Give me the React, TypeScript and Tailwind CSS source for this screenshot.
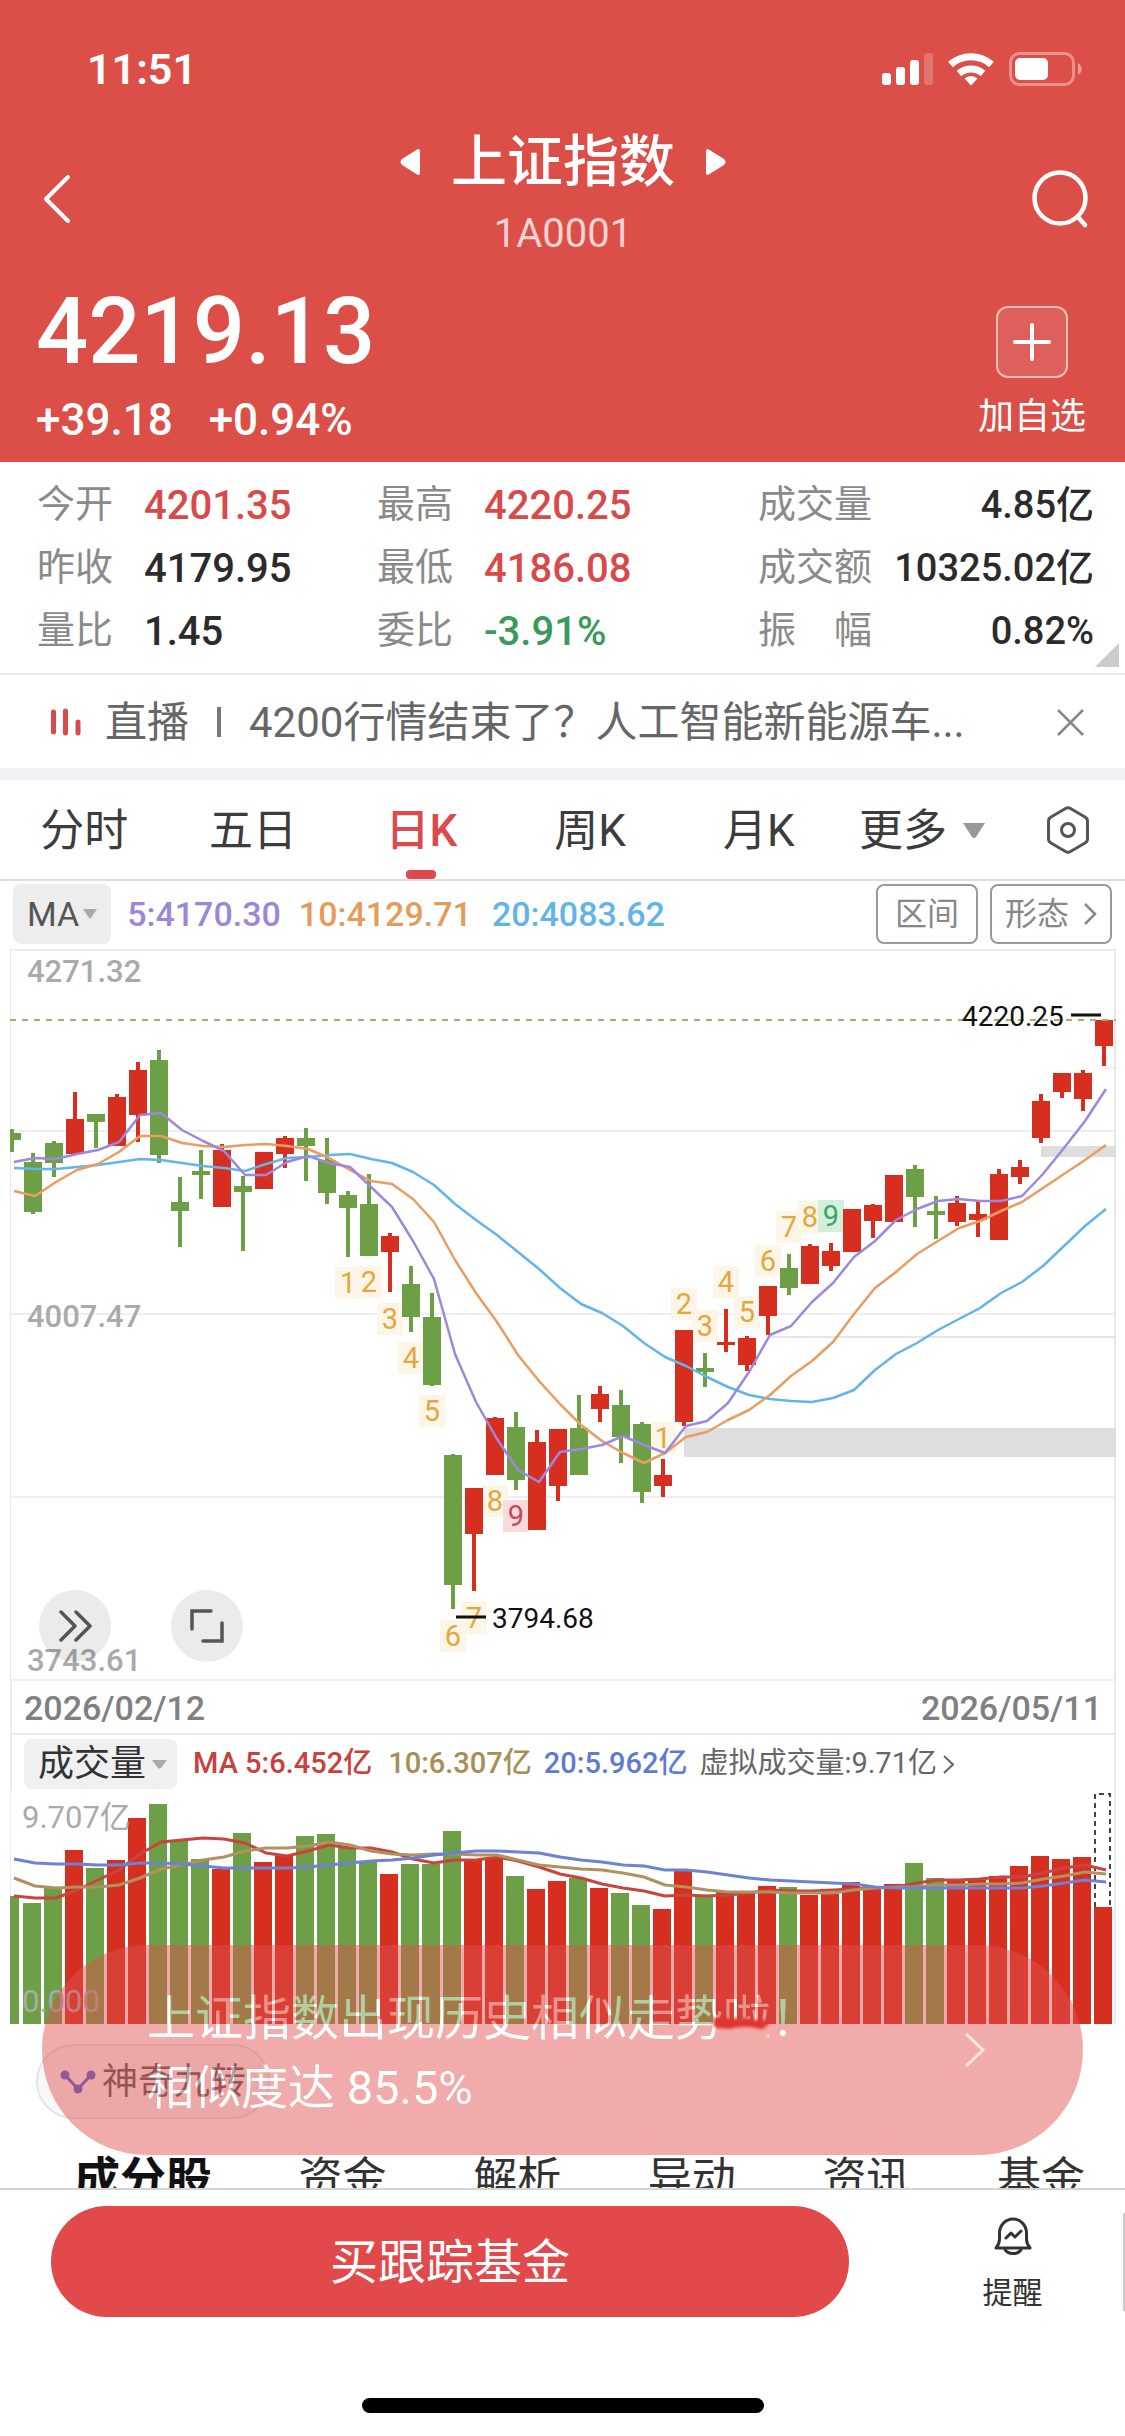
import { useState } from 'react'
import clsx from 'clsx'

const RED = '#d62f20'
const GREEN = '#6d9f46'

// [body top, body bottom, wick top, wick bottom, r = up / g = down]
type Candle = [number, number, number, number, 'r' | 'g']

const CANDLES: Candle[] = [
  [184, 191, 180, 203, 'g'], [213, 263, 204, 265, 'g'], [194, 214, 192, 228, 'g'], [170, 205, 143, 205, 'r'],
  [165, 173, 165, 199, 'g'], [148, 197, 145, 197, 'r'], [121, 166, 113, 193, 'r'], [111, 206, 101, 214, 'g'],
  [253, 262, 228, 298, 'g'], [222, 226, 201, 250, 'g'], [201, 258, 195, 258, 'r'], [237, 243, 227, 302, 'g'],
  [203, 240, 203, 240, 'r'], [189, 205, 187, 219, 'r'], [189, 197, 179, 232, 'g'], [211, 244, 189, 255, 'g'],
  [246, 259, 242, 308, 'g'], [255, 307, 225, 307, 'g'], [287, 303, 284, 343, 'r'], [335, 368, 317, 383, 'g'],
  [368, 436, 344, 437, 'g'], [506, 636, 505, 660, 'g'], [539, 585, 539, 642, 'r'], [469, 526, 468, 526, 'r'],
  [478, 531, 463, 541, 'g'], [493, 581, 481, 581, 'r'], [480, 537, 480, 552, 'r'], [479, 526, 446, 526, 'g'],
  [445, 460, 437, 473, 'r'], [456, 488, 441, 514, 'g'], [475, 543, 473, 554, 'g'], [526, 537, 510, 548, 'r'],
  [381, 473, 381, 477, 'r'], [419, 423, 404, 438, 'g'], [393, 396, 360, 403, 'r'], [389, 416, 387, 422, 'r'],
  [337, 367, 337, 386, 'r'], [319, 339, 305, 346, 'g'], [297, 335, 295, 335, 'r'], [302, 317, 294, 322, 'r'],
  [260, 303, 260, 303, 'r'], [256, 272, 255, 289, 'r'], [226, 273, 226, 273, 'r'], [220, 248, 216, 278, 'g'],
  [262, 266, 247, 290, 'g'], [254, 273, 247, 277, 'r'], [265, 271, 252, 288, 'r'], [225, 291, 220, 291, 'r'],
  [218, 228, 211, 235, 'r'], [152, 189, 145, 194, 'r'], [124, 143, 124, 149, 'r'], [124, 150, 121, 162, 'r'],
  [71, 97, 71, 117, 'r'],
]

const MA5 = [213, 209, 210, 205, 201, 193, 166, 164, 181, 192, 202, 226, 226, 213, 207, 214, 218, 238, 258, 292, 330, 405, 453, 490, 521, 533, 503, 500, 496, 487, 496, 504, 477, 472, 454, 423, 386, 377, 353, 334, 308, 292, 271, 260, 252, 250, 252, 252, 247, 225, 199, 172, 140]
const MA10 = [242, 247, 233, 221, 215, 203, 187, 187, 194, 197, 198, 196, 195, 197, 200, 209, 221, 232, 235, 250, 273, 311, 344, 373, 406, 432, 455, 476, 492, 504, 514, 504, 488, 483, 471, 461, 446, 427, 412, 393, 365, 339, 323, 305, 292, 279, 272, 262, 253, 239, 225, 211, 196]
const MA20 = [219, 220, 220, 218, 216, 213, 210, 211, 214, 217, 219, 222, 215, 209, 208, 206, 205, 210, 214, 223, 236, 255, 271, 286, 303, 320, 339, 355, 364, 377, 394, 408, 417, 428, 438, 446, 450, 452, 453, 449, 441, 421, 405, 394, 381, 370, 359, 344, 333, 317, 297, 277, 260]

const VOLUMES = [116, 123, 108, 70, 88, 80, 38, 24, 61, 79, 89, 53, 82, 76, 56, 54, 67, 82, 94, 84, 84, 51, 80, 78, 96, 109, 101, 98, 108, 113, 125, 129, 91, 115, 112, 112, 106, 107, 115, 114, 102, 107, 104, 83, 98, 101, 100, 96, 86, 76, 79, 77, 127]
const VOL5 = [116, 118, 118, 110, 100, 90, 74, 62, 60, 58, 59, 63, 73, 76, 71, 65, 68, 68, 72, 79, 83, 80, 80, 77, 81, 87, 94, 98, 104, 108, 111, 116, 115, 116, 115, 113, 110, 111, 111, 110, 109, 108, 107, 103, 100, 100, 99, 97, 97, 93, 88, 85, 90]
const VOL10 = [98, 106, 108, 107, 107, 105, 98, 89, 85, 80, 77, 71, 68, 68, 66, 62, 65, 71, 74, 75, 74, 74, 75, 75, 80, 85, 87, 89, 90, 93, 97, 105, 107, 110, 112, 112, 112, 113, 113, 113, 110, 108, 107, 107, 105, 105, 104, 104, 103, 99, 96, 92, 94]
const VOL20 = [79, 83, 84, 84, 85, 85, 83, 83, 84, 86, 88, 88, 88, 88, 87, 85, 83, 81, 80, 78, 75, 73, 71, 71, 72, 73, 77, 80, 82, 85, 86, 90, 90, 92, 95, 98, 100, 101, 102, 103, 104, 107, 108, 108, 108, 108, 108, 108, 108, 106, 103, 100, 102]

// nine-turn marks: candle index, digit, top of the tag
const MARKS: [number, number, number][] = [
  [16, 1, 318], [17, 2, 317], [18, 3, 354], [19, 4, 393], [20, 5, 446], [21, 6, 671], [22, 7, 653], [23, 8, 536], [24, 9, 551],
  [31, 1, 473], [32, 2, 339], [33, 3, 361], [34, 4, 317], [35, 5, 347], [36, 6, 296], [37, 7, 262], [38, 8, 252], [39, 9, 251],
]

const QUOTES = [
  { label: '今开', value: '4201.35', tone: 'text-[#d84a4a]' },
  { label: '最高', value: '4220.25', tone: 'text-[#d84a4a]' },
  { label: '成交量', value: '4.85亿', tone: 'text-[#2b2b2b]' },
  { label: '昨收', value: '4179.95', tone: 'text-[#2b2b2b]' },
  { label: '最低', value: '4186.08', tone: 'text-[#d84a4a]' },
  { label: '成交额', value: '10325.02亿', tone: 'text-[#2b2b2b]' },
  { label: '量比', value: '1.45', tone: 'text-[#2b2b2b]' },
  { label: '委比', value: '-3.91%', tone: 'text-[#3a9a5b]' },
  { label: '振　幅', value: '0.82%', tone: 'text-[#2b2b2b]' },
]

const PERIODS = ['分时', '五日', '日K', '周K', '月K']
const SECTIONS = ['成分股', '资金', '解析', '异动', '资讯', '基金']

const line = (ys: number[]) => ys.map((y, i) => `${14 + i * 21},${y}`).join(' ')

function StatusBar() {
  return (
    <div className="flex h-[50px] items-center justify-between pl-[87px] pr-[42px]">
      <span className="text-[43px] font-semibold leading-[50px]">11:51</span>
      <svg className="h-[36px] w-[202px]" viewBox="0 0 202 36" fill="#fff">
        <rect x="1" y="22" width="9" height="12" rx="3" />
        <rect x="15" y="16" width="9" height="18" rx="3" />
        <rect x="29" y="9" width="9" height="25" rx="3" />
        <rect x="43" y="2" width="9" height="32" rx="3" opacity=".22" />
        <g fill="none" stroke="#fff" strokeWidth="7">
          <path d="M69.500 13.500a31 31 0 0 1 41 0" />
          <path d="M78 22.500a18.500 18.500 0 0 1 24 0" />
        </g>
        <path d="M90 34.500l-6.500-7a9.500 9.500 0 0 1 13 0z" />
        <rect x="129.500" y="2.500" width="63" height="31" rx="9" fill="none" stroke="#fff" strokeWidth="3" opacity=".38" />
        <rect x="134" y="7" width="33" height="22" rx="5" />
        <path d="M197 12.500c5 1.500 5 9.500 0 11z" opacity=".45" />
      </svg>
    </div>
  )
}

function Header() {
  return (
    <header className="bg-[#db4f48] pb-[18px] pt-[44px] text-white">
      <StatusBar />
      <nav className="mt-9 flex h-[138px] items-center justify-between pl-[42px] pr-[37px]">
        <button aria-label="返回" className="w-[52px]">
          <svg className="h-[50px] w-[30px]" viewBox="0 0 30 50" fill="none" stroke="#fff" strokeWidth="4" strokeLinecap="round" strokeLinejoin="round">
            <path d="M26 3L4 25l22 22" />
          </svg>
        </button>
        <div className="self-start text-center">
          <div className="flex items-center gap-[31px]">
            <button aria-label="上一个">
              <svg className="h-[26px] w-[20px]" viewBox="0 0 20 26" fill="#fff"><path d="M18 0q2 0 2 2v22q0 2-2 2L2 16q-3-3 0-6z" /></svg>
            </button>
            <h1 className="text-[56px] font-medium leading-[64px]">上证指数</h1>
            <button aria-label="下一个">
              <svg className="h-[26px] w-[20px]" viewBox="0 0 20 26" fill="#fff"><path d="M2 0Q0 0 0 2v22q0 2 2 2l16-10q3-3 0-6z" /></svg>
            </button>
          </div>
          <p className="mt-[18px] text-[40px] leading-[44px] text-white/75">1A0001</p>
        </div>
        <button aria-label="搜索">
          <svg className="h-[58px] w-[56px]" viewBox="0 0 56 58" fill="none" stroke="#fff" strokeWidth="4.500" strokeLinecap="round">
            <circle cx="28" cy="28" r="25.500" />
            <path d="M46 47l7 8" />
          </svg>
        </button>
      </nav>
      <div className="flex items-start justify-between pl-[36px] pr-[39px] pt-3.5">
        <div>
          <p className="text-[92px] font-medium leading-[100px]">4219.13</p>
          <p className="mt-3.5 flex gap-9 text-[44px] font-medium leading-[48px]">
            <span>+39.18</span>
            <span>+0.94%</span>
          </p>
        </div>
        <button className="mt-6 flex flex-col items-center">
          <span className="flex size-[72px] items-center justify-center rounded-[12px] border-2 border-white/60 bg-white/10">
            <svg className="size-[38px]" viewBox="0 0 38 38" stroke="#fff" strokeWidth="4" strokeLinecap="round"><path d="M19 2v34M2 19h34" /></svg>
          </span>
          <span className="mt-[15px] text-[36px] leading-[48px]">加自选</span>
        </button>
      </div>
    </header>
  )
}

function QuoteGrid() {
  return (
    <div className="relative border-b-2 border-[#e9e9e9] pb-[11px] pl-[37px] pr-[31px] pt-[11px]">
      <dl className="grid grid-cols-[340fr_381fr_336fr]">
        {QUOTES.map((q, i) => (
          <div key={q.label} className={clsx('flex h-[63px] items-center', i % 3 === 2 && 'justify-between')}>
            <dt className={clsx('text-[38px] text-[#8a8a8a]', i % 3 !== 2 && 'w-[107px]')}>{q.label}</dt>
            <dd className={clsx('pt-0.5 font-medium', i % 3 === 2 ? 'text-[38px]' : 'text-[40px]', q.tone)}>{q.value}</dd>
          </div>
        ))}
      </dl>
      <svg className="absolute bottom-1.5 right-1.5 size-[24px]" viewBox="0 0 24 24" fill="#ccc"><path d="M24 0v24H0z" /></svg>
    </div>
  )
}

function NewsBar() {
  return (
    <div className="flex h-[93px] items-center pl-[51px] pr-[41px] pt-px text-[#666]">
      <svg className="h-[28px] w-[30px] shrink-0" viewBox="0 0 30 28" stroke="#d84a4a" strokeWidth="5" strokeLinecap="round">
        <path d="M2.500 4v20M14.500 3v22M27 14v11" />
      </svg>
      <a href="#live" className="ml-6 flex min-w-0 flex-1 items-center whitespace-nowrap text-[42px]">
        直播
        <span className="mx-[28px] h-[30px] w-[4px] bg-[#777]" />
        4200行情结束了？人工智能新能源车...
      </a>
      <button aria-label="关闭">
        <svg className="size-[27px]" viewBox="0 0 27 27" stroke="#888" strokeWidth="2.500"><path d="M1 1l25 25M26 1L1 26" /></svg>
      </button>
    </div>
  )
}

function PeriodTabs() {
  const [active, setActive] = useState('日K')
  return (
    <div className="flex h-[101px] items-center border-b-2 border-[#dedede] pr-9 text-[44px] text-[#3c3c3c]">
      <div role="tablist" className="grid h-full flex-[843] grid-cols-5">
        {PERIODS.map(p => (
          <button
            key={p}
            role="tab"
            aria-selected={p === active}
            onClick={() => setActive(p)}
            className={clsx('relative pt-0.5', p === active && 'font-medium text-[#dc4a4c]')}>
            {p}
            {p === active && <span className="absolute bottom-0 left-1/2 h-[9px] w-[30px] -translate-x-1/2 rounded-[4px] bg-[#dc4a4c]" />}
          </button>
        ))}
      </div>
      <div className="flex flex-[246] items-center justify-between">
        <button className="flex items-center gap-4 pl-4 pt-0.5">
          更多
          <svg className="h-[15px] w-[22px]" viewBox="0 0 22 15" fill="#999"><path d="M0 0h22L13 14q-2 2-4 0z" /></svg>
        </button>
        <button aria-label="设置">
          <svg className="h-[48px] w-[42px]" viewBox="0 0 42 48" fill="none" stroke="#555" strokeWidth="3" strokeLinejoin="round">
            <path d="M18.500 2.500q2.500-1.500 5 0L38 11q2.500 1.500 2.500 4v18q0 2.500-2.500 4l-14.500 8.500q-2.500 1.500-5 0L4 37q-2.500-1.500-2.500-4V15q0-2.500 2.500-4z" />
            <circle cx="21" cy="24" r="6.500" />
          </svg>
        </button>
      </div>
    </div>
  )
}

function MaLegend() {
  return (
    <div className="flex h-[68px] items-center gap-6 px-[13px] pb-0.5 text-[34px]">
      <button className="flex h-[60px] items-center gap-1 rounded-[8px] bg-[#ededed] px-3.5 text-[#555]">
        MA
        <svg className="h-[10px] w-[14px]" viewBox="0 0 14 10" fill="#aaa"><path d="M0 0h14L8 9q-1 1-2 0z" /></svg>
      </button>
      <span className="-ml-2 font-medium text-[#9b87d6]">5:4170.30</span>
      <span className="-ml-1.5 font-medium text-[#e59b5c]">10:4129.71</span>
      <span className="-ml-1 font-medium text-[#62b4e8]">20:4083.62</span>
      <button className="ml-auto h-[60px] rounded-[8px] border-2 border-[#999] px-[17px] text-[32px] text-[#888]">区间</button>
      <button className="-ml-3 flex h-[60px] items-center gap-3.5 rounded-[8px] border-2 border-[#999] px-[13px] text-[32px] text-[#888]">
        形态
        <svg className="h-[22px] w-[14px]" viewBox="0 0 14 22" fill="none" stroke="#888" strokeWidth="2.500"><path d="M2 1l10 10L2 21" /></svg>
      </button>
    </div>
  )
}

function KLineChart() {
  return (
    <div className="relative">
      <svg className="block h-auto w-full" viewBox="10 0 1106 732" fontFamily="Roboto, sans-serif">
        {[1, 182, 365, 548, 731].map(y => <path key={y} d={`M10 ${y}H1116`} stroke="#efefef" strokeWidth="2" />)}
        <path d="M10 0V732M1115 0V732" stroke="#e9e9e9" strokeWidth="2" />
        <g fill="#aaa" fontSize="31" fontWeight="500">
          <text x="27" y="33">4271.32</text>
          <text x="27" y="378">4007.47</text>
          <text x="27" y="722">3743.61</text>
        </g>

        {/* gaps */}
        <rect x="684" y="479" width="432" height="29" fill="#dedede" />
        <rect x="1041" y="197" width="75" height="11" fill="#dedede" />
        <path d="M770 388H1116" stroke="#ddd" strokeWidth="1.500" />
        <path d="M1104 119H1116" stroke="#eed9d9" strokeWidth="1" />

        {MARKS.map(([i, n, y]) => {
          const nine = n === 9
          const up = i > 30
          return (
            <g key={i}>
              <rect x={12 + i * 21 - 13} y={y} width="26" height="32" fill={nine ? (up ? '#d5efdf' : '#f8dcdd') : '#fdf5e8'} />
              <text x={12 + i * 21} y={y + 26} fontSize="29" textAnchor="middle" fill={nine ? (up ? '#3fa564' : '#cc4558') : '#e3a83c'}>{n}</text>
            </g>
          )
        })}

        {CANDLES.map(([t, b, wt, wb, c], i) => (
          <g key={i} fill={c === 'r' ? RED : GREEN}>
            <rect x={i ? 3 + i * 21 : 10} y={t} width={i ? 18 : 11} height={b - t} />
            <rect x={10 + i * 21} y={wt} width="4" height={wb - wt} />
          </g>
        ))}

        <path d="M10 71H1116" stroke="#b9a36f" strokeWidth="2" strokeDasharray="6 6" />
        <g fill="none" strokeWidth="2.500" strokeLinejoin="round">
          <polyline points={line(MA20)} stroke="#62b5ea" />
          <polyline points={line(MA10)} stroke="#e99d5f" />
          <polyline points={line(MA5)} stroke="#9c88dc" />
        </g>

        <g fill="#111" fontSize="28">
          <text x="962" y="77">4220.25</text>
          <text x="492" y="679">3794.68</text>
        </g>
        <path d="M1071 66h30M456 668h30" stroke="#111" strokeWidth="3" />
      </svg>
      <button aria-label="展开" className="absolute bottom-[19px] left-[29px] flex size-[72px] items-center justify-center rounded-full bg-black/8">
        <svg className="h-[32px] w-[34px]" viewBox="0 0 34 32" fill="none" stroke="#555" strokeWidth="3.500" strokeLinecap="round" strokeLinejoin="round">
          <path d="M3 2l14 14L3 30M18 2l14 14-14 14" />
        </svg>
      </button>
      <button aria-label="全屏" className="absolute bottom-[19px] left-[161px] flex size-[72px] items-center justify-center rounded-full bg-black/8">
        <svg className="size-[34px]" viewBox="0 0 34 34" fill="none" stroke="#555" strokeWidth="3.500" strokeLinecap="round">
          <path d="M2 20V2h19M32 14v18H13" />
        </svg>
      </button>
    </div>
  )
}

function VolumeLegend() {
  return (
    <div className="flex h-[55px] items-center gap-3 whitespace-nowrap border-x-2 border-[#ececec] pl-3 pt-[3px] text-[29px]">
      <button className="mr-1 flex h-[50px] items-center gap-1.5 rounded-[8px] bg-[#f0f0f0] pl-3.5 pr-2.5 text-[36px] text-[#333]">
        成交量
        <svg className="h-[9px] w-[15px]" viewBox="0 0 15 9" fill="#aaa"><path d="M0 0h15L9 8q-1.500 1-3 0z" /></svg>
      </button>
      <span className="pr-1 font-medium text-[#c9403d]">MA 5:6.452亿</span>
      <span className="font-medium text-[#a88d57]">10:6.307亿</span>
      <span className="font-medium text-[#5f7bd0]">20:5.962亿</span>
      <a href="#virtual" className="flex items-center gap-1.5 text-[#666]">
        虚拟成交量:9.71亿
        <svg className="h-[19px] w-[11px]" viewBox="0 0 11 19" fill="none" stroke="#666" strokeWidth="2"><path d="M1 1l9 8.500L1 18" /></svg>
      </a>
    </div>
  )
}

function VolumeChart() {
  return (
    <svg className="block h-auto w-full" viewBox="10 10 1106 234" fontFamily="Roboto, 'Noto Sans CJK SC', sans-serif">
      <path d="M10 10V244M1115 10V244" stroke="#ececec" strokeWidth="2" />
      {VOLUMES.map((y, i) => (
        <rect key={i} x={i ? 2 + i * 21 : 9} y={y} width={i ? 18 : 10} height={244 - y} fill={CANDLES[i][4] === 'r' ? RED : GREEN} />
      ))}
      <path d="M1095 127V14h15v113" fill="none" stroke="#444" strokeWidth="2" strokeDasharray="5 4" />
      <g fill="none" strokeWidth="3" strokeLinejoin="round">
        <polyline points={line(VOL5)} stroke="#c9443f" />
        <polyline points={line(VOL10)} stroke="#b09260" />
        <polyline points={line(VOL20)} stroke="#6c82d2" />
      </g>
      <g fill="#aaa" fontSize="31">
        <text x="22" y="48">9.707亿</text>
        <text x="22" y="232">0.000</text>
      </g>
    </svg>
  )
}

function SimilarTrendToast() {
  return (
    <div className="absolute inset-x-[42px] bottom-0">
      <a
        href="#similar"
        className="flex h-[210px] items-center justify-between rounded-full bg-[#e0514f] pl-[105px] pr-[98px] text-white opacity-48">
        <span className="pt-1.5 text-[47px] leading-[69px]">
          <span className="block text-[48px]">上证指数出现历史相似走势啦！</span>
          <span className="block">相似度达 85.5%</span>
        </span>
        <svg className="h-[34px] w-[20px]" viewBox="0 0 20 34" fill="none" stroke="#fff" strokeOpacity=".7" strokeWidth="3"><path d="M1 1l17 16L1 33" /></svg>
      </a>
      {/* smudge over the last character */}
      <svg className="absolute left-[668px] top-[66px] h-[36px] w-[70px]" viewBox="0 0 70 36">
        <defs>
          <filter id="soft" x="-20%" y="-40%" width="140%" height="180%"><feGaussianBlur stdDeviation="1.500" /></filter>
        </defs>
        <g filter="url(#soft)">
          <path d="M10 14h48v18H10z" fill="#f0abaa" />
          <path d="M5 8q7-3 15 0 18-3 22 2 8-4 16 1 2 3-1 4-4 5-9 3-10-3-22-1-6 2-12 1-8 0-11-4z" fill="#e03632" />
        </g>
      </svg>
    </div>
  )
}

function BottomBar() {
  return (
    <footer className="border-t-2 border-[#d4d4d4] bg-white pb-6 pt-4">
      <div className="flex items-center pl-[51px]">
        <button className="h-[111px] flex-[798] rounded-full bg-[#e2494b] pt-0.5 text-[48px] text-white">买跟踪基金</button>
        <button className="ml-[53px] flex h-[98px] flex-[221] flex-col items-center border-r-2 border-[#ccc] text-[#333]">
          <svg className="mt-1 h-[40px] w-[38px] shrink-0" viewBox="0 0 38 40" fill="none" stroke="#333" strokeWidth="3" strokeLinecap="round" strokeLinejoin="round">
            <path d="M2 31q3.500-4 3.500-9v-6a13.500 14 0 0 1 27 0v6q0 5 3.500 9z" />
            <path d="M11 32.500a8.500 6 0 0 0 16 0" />
            <path d="M12 21l5-5 4 4 6-6" />
          </svg>
          <span className="mt-4 text-[30px] leading-[40px]">提醒</span>
        </button>
      </div>
      <div className="mx-auto mt-[81px] h-[15px] w-[402px] rounded-full bg-black" />
    </footer>
  )
}

export default function App() {
  return (
    <div className="w-full overflow-hidden bg-white font-[Roboto,'Noto_Sans_CJK_SC',sans-serif]">
      <Header />
      <QuoteGrid />
      <NewsBar />
      <div className="h-3 bg-[#f1f2f6]" />
      <PeriodTabs />
      <MaLegend />
      <main className="pl-[10px] pr-[9px]">
        <KLineChart />
        <div className="flex h-[54px] items-center justify-between border-x-2 border-b-2 border-[#ececec] px-3 pt-0.5 text-[34px] font-medium text-[#808080]">
          <span>2026/02/12</span>
          <span>2026/05/11</span>
        </div>
        <VolumeLegend />
      </main>
      <section className="relative">
        <div className="pl-[10px] pr-[9px]">
          <VolumeChart />
        </div>
        <div className="px-[36px] pb-9 pt-5">
          <button className="flex h-[75px] items-center gap-1.5 rounded-full border-2 border-[#e4e4e6] bg-[#f8f8f9] px-[22px] text-[36px] text-[#555]">
            <svg className="h-[24px] w-[36px]" viewBox="0 0 36 24" fill="#4a5fe0">
              <path d="M5 5l13 14L31 5" fill="none" stroke="#4a5fe0" strokeWidth="3" />
              <circle cx="5" cy="5" r="4.500" /><circle cx="18" cy="19" r="4.500" /><circle cx="31" cy="5" r="4.500" />
            </svg>
            神奇九转
          </button>
        </div>
        <SimilarTrendToast />
      </section>
      {/* only the top of this tab row shows above the bottom bar */}
      <div className="flex h-[33px] justify-between overflow-hidden pl-[74px] pr-[40px] text-[44px] leading-[48px] text-[#333]">
        {SECTIONS.map((s, i) => (
          <button key={s} className={clsx('h-[48px]', i === 0 && 'text-[46px] font-bold text-[#111]')}>{s}</button>
        ))}
      </div>
      <BottomBar />
    </div>
  )
}
